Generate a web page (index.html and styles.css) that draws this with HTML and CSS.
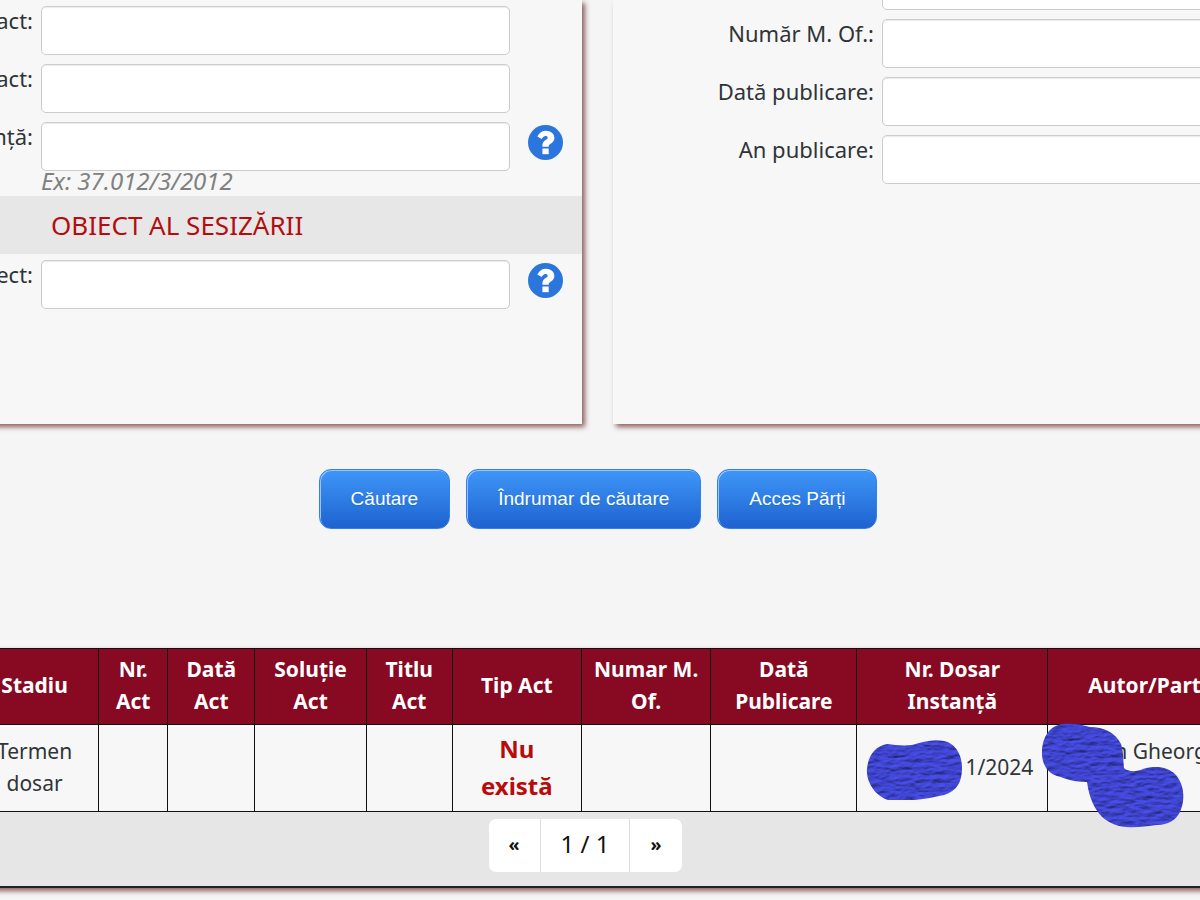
FILE: index.html
```
<!DOCTYPE html>
<html lang="ro">
  <head>
    <meta charset="utf-8">
    <meta name="viewport" content="width=device-width, initial-scale=1.0">
    <title>Căutare dosare</title>
    <link rel="stylesheet" href="styles.css">
  </head>
  <body>
    <svg class="defs" width="0" height="0" aria-hidden="true">
      <symbol id="help" viewBox="0 0 35 35">
        <circle cx="17.5" cy="17.5" r="17.5" fill="#2a76dd"/>
        <path d="M9.300 11.400C11.400 7.500 14 5.700 18 5.700c4.600 0 8.400 2.900 8.400 7 0 3.100-1.600 4.500-3.800 6.100-1.700 1.200-1.900 1.700-1.900 2.900h-6.300v-1.500c0-2.800 1.500-4.100 3.600-5.500 1.300-.9 1.700-1.200 1.700-2 0-1-.9-1.600-2.100-1.600-1.600 0-2.500.8-3.900 2.800z" fill="#fff"/>
        <path d="M14.400 23.500h6.300v5.700h-6.300z" fill="#fff"/>
      </symbol>
      <filter id="brush" x="0" y="0" width="100%" height="100%" color-interpolation-filters="sRGB">
        <feTurbulence type="fractalNoise" baseFrequency="0.09 0.24" numOctaves="3" seed="7" result="noise"/>
        <feDiffuseLighting in="noise" surfaceScale="1.5" diffuseConstant="1.1" lighting-color="#4248d8" result="light">
          <feDistantLight azimuth="250" elevation="60"/>
        </feDiffuseLighting>
        <feComposite in="light" in2="SourceGraphic" operator="in"/>
      </filter>
    </svg>

    <form class="search">
      <div class="panels">
        <div class="panel">
          <div class="row first">
            <label for="tipAct">act:</label>
            <input type="text" id="tipAct">
          </div>
          <div class="row">
            <label for="dataAct">act:</label>
            <input type="text" id="dataAct">
          </div>
          <div class="row">
            <label for="instanta">nță:</label>
            <input type="text" id="instanta">
            <a class="help" href="#" aria-label="Ajutor"><svg><use href="#help"/></svg></a>
          </div>
          <p class="hint">Ex: 37.012/3/2012</p>
          <h2 class="section">OBIECT AL SESIZĂRII</h2>
          <div class="row">
            <label for="obiect">ect:</label>
            <input type="text" id="obiect">
            <a class="help" href="#" aria-label="Ajutor"><svg><use href="#help"/></svg></a>
          </div>
        </div>

        <div class="panel wide">
          <div class="row">
            <span></span>
            <input type="text" aria-label="Publicare">
          </div>
          <div class="row">
            <label for="numarMof">Număr M. Of.:</label>
            <input type="text" id="numarMof">
          </div>
          <div class="row">
            <label for="dataPub">Dată publicare:</label>
            <input type="text" id="dataPub">
          </div>
          <div class="row">
            <label for="anPub">An publicare:</label>
            <input type="text" id="anPub">
          </div>
        </div>
      </div>

      <div class="actions">
        <button type="button">Căutare</button>
        <button type="button">Îndrumar de căutare</button>
        <button type="button">Acces Părți</button>
      </div>
    </form>

    <div class="results">
      <table>
        <colgroup>
          <col class="c-stadiu">
          <col class="c-nr">
          <col class="c-data">
          <col class="c-solutie">
          <col class="c-titlu">
          <col class="c-tip">
          <col class="c-mof">
          <col class="c-pub">
          <col class="c-dosar">
          <col>
        </colgroup>
        <thead>
          <tr>
            <th>Stadiu</th>
            <th>Nr.<br>Act</th>
            <th>Dată<br>Act</th>
            <th>Soluție<br>Act</th>
            <th>Titlu<br>Act</th>
            <th>Tip Act</th>
            <th>Numar M.<br>Of.</th>
            <th>Dată<br>Publicare</th>
            <th>Nr. Dosar<br>Instanță</th>
            <th class="author">Autor/Part</th>
          </tr>
        </thead>
        <tbody>
          <tr>
            <td>Termen<br>dosar</td>
            <td></td>
            <td></td>
            <td></td>
            <td></td>
            <td class="missing">Nu<br>există</td>
            <td></td>
            <td></td>
            <td class="dosar">1/2024
              <svg class="mark mark-dosar" viewBox="0 0 97 62" aria-hidden="true">
                <path filter="url(#brush)" d="M1 29C2 16 9 6 21 4c8 1 16 2 25 1C57 2 66-1 78 1c11 2 18 13 18 27 0 14-5 23-18 27-10 2-18 4-29 5H22C10 56 0 43 1 29z"/>
              </svg>
            </td>
            <td class="name">n Gheorg
              <svg class="mark mark-name" viewBox="0 0 143 105" aria-hidden="true">
                <path filter="url(#brush)" d="M1 30C1 14 9 2 22 1c9-1 18 0 27 3 13 0 25 5 31 17 3 9 2 16 3 24 4 4 13 4 19 1 13-4 25-2 33 6 9 11 9 26 4 37-4 8-12 13-23 13-11 1-20 3-31 2-22-2-35-17-39-45-13 0-20-3-30-6C7 50 1 42 1 30z"/>
              </svg>
            </td>
          </tr>
        </tbody>
      </table>
      <div class="pager">
        <a href="#">«</a>
        <span>1 / 1</span>
        <a href="#">»</a>
      </div>
    </div>
  </body>
</html>
```

FILE: styles.css
```
* {
  box-sizing: border-box;
}
body {
  min-height: 100vh;
  margin: 0;
  background-color: #f5f5f5;
  color: #303437;
  font-family: "Trebuchet MS", "Noto Sans", sans-serif;
  font-size: 22px;
  line-height: 32px;
  overflow: hidden;
}
.defs {
  position: absolute;
}
.panels {
  display: grid;
  grid-template-columns: 582fr 587fr;
  gap: 31px;
  min-height: 424px;
}
/* both panels run on past the window */
.panel {
  margin-left: -10px;
  background-color: #f7f7f7;
  box-shadow: 3px 3px 5px rgba(105, 50, 50, 0.75);
}
.wide {
  margin: 0 -10px 0 0;
}
.row {
  display: grid;
  grid-template-columns: 43px 1fr 64px;
  column-gap: 8px;
  margin-bottom: 9px;
}
.row.first {
  padding-top: 6px;
}
.wide .row {
  grid-template-columns: 261px 1fr;
}
.wide .row:first-child {
  margin-top: -39px;
}
.row label {
  justify-self: end;
  line-height: 28px;
  white-space: nowrap;
}
.row input {
  width: 100%;
  height: 49px;
  padding: 6px 12px;
  border: 1px solid #ccc;
  border-radius: 5px;
  background-color: #fff;
  box-shadow: inset 0 1px 1px rgba(0, 0, 0, 0.08);
  font: inherit;
}
.help {
  padding: 3px 0 0 10px;
}
.help svg {
  display: block;
  width: 35px;
  height: 35px;
}
.hint {
  margin: -9px 0 0;
  padding: 0 0 5px 51px;
  color: #808080;
  font-size: 24px;
  font-style: italic;
  line-height: 20px;
}
.section {
  margin: 0 0 6px;
  padding-left: 61px;
  background-color: #e7e7e7;
  color: #b30d10;
  font-family: Tahoma, "Noto Sans", sans-serif;
  font-size: 26px;
  font-weight: normal;
  line-height: 58px;
}
.actions {
  display: flex;
  justify-content: center;
  gap: 16px;
  padding: 45px 4px 119px 0;
}
.actions button {
  height: 60px;
  padding: 0 31px;
  border: 1px solid #337fed;
  border-radius: 12px;
  background: linear-gradient(to bottom, #3d94f6 5%, #1e62d0 100%);
  box-shadow: inset 1px 1px 0 #97c4fe;
  color: #fff;
  font-family: Arial, "Liberation Sans", sans-serif;
  font-size: 19px;
  text-shadow: 0 1px 0 #1570cd;
  cursor: pointer;
}
.results {
  margin: 0 -52px 0 -30px;
  border-bottom: 2px solid #222;
  background-color: #e6e6e6;
  box-shadow: 3px 3px 5px rgba(105, 50, 50, 0.75);
}
table {
  width: 100%;
  border-collapse: collapse;
  table-layout: fixed;
  font-size: 21px;
}
th,
td {
  padding: 0 0 4px;
  border: 1px solid #111;
  text-align: center;
}
th {
  height: 76px;
  background-color: #870922;
  color: #fff;
}
td {
  height: 87px;
  padding-bottom: 2px;
  background-color: #f7f7f7;
}
.c-stadiu { width: 10%; }
.c-nr { width: 5.4%; }
.c-data { width: 6.8%; }
.c-solutie { width: 8.7%; }
.c-titlu { width: 6.7%; }
.c-tip { width: 10.1%; }
.c-mof { width: 10.1%; }
.c-pub { width: 11.4%; }
.c-dosar { width: 14.9%; }
.missing {
  color: #b80c0c;
  font-weight: bold;
  font-size: 24px;
  line-height: 37px;
}
.author {
  padding-left: 40px;
  text-align: left;
}
.dosar {
  position: relative;
  padding-right: 14px;
  text-align: right;
}
.name {
  position: relative;
  padding: 10px 0 0 66px;
  text-align: left;
  vertical-align: top;
  white-space: nowrap;
}
/* brush strokes over the personal data */
.mark {
  position: absolute;
}
.mark-dosar {
  top: 15px;
  left: 9px;
  width: 97px;
  height: 62px;
}
.mark-name {
  top: -2px;
  left: -7px;
  width: 143px;
  height: 105px;
}
.pager {
  display: flex;
  justify-content: center;
  height: 74px;
  padding: 7px 52px 0 0;
  color: #111;
}
.pager a,
.pager span {
  height: 53px;
  padding: 0 20px;
  border-right: 1px solid #ddd;
  background-color: #fff;
  line-height: 50px;
}
.pager span {
  font-size: 24px;
}
.pager a {
  color: #111;
  font-weight: bold;
  font-size: 18px;
  text-decoration: none;
}
.pager a:first-child {
  border-radius: 7px 0 0 7px;
}
.pager a:last-child {
  border-right: 0;
  border-radius: 0 7px 7px 0;
}
```
